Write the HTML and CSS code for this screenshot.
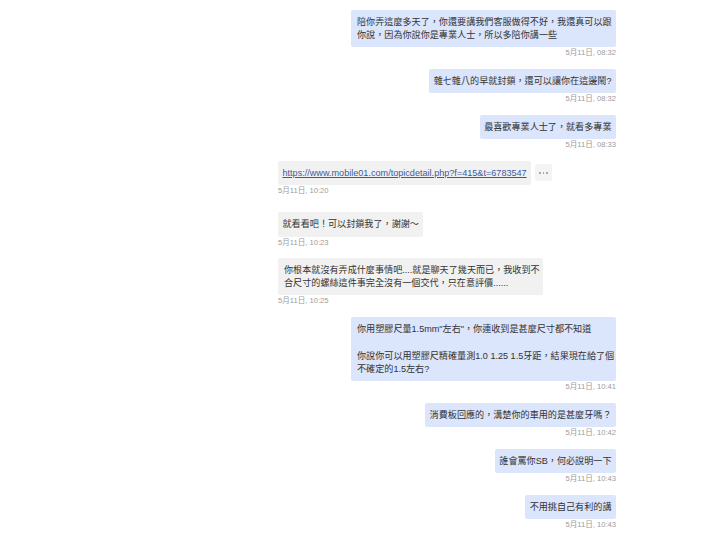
FILE: index.html
```html
<!DOCTYPE html>
<html lang="zh-Hant">
<head>
<meta charset="utf-8">
<title>Chat</title>
<link rel="stylesheet" href="styles.css">
</head>
<body>
<div class="chat">
  <div class="msg out">
    <div class="bubble full">陪你弄這麼多天了，你還要講我們客服做得不好，我還真可以跟<br>你說，因為你說你是專業人士，所以多陪你講一些</div>
    <div class="time">5月11日, 08:32</div>
  </div>
  <div class="msg out">
    <div class="bubble">雜七雜八的早就封鎖，還可以讓你在這邊鬧?</div>
    <div class="time">5月11日, 08:32</div>
  </div>
  <div class="msg out">
    <div class="bubble">最喜歡專業人士了，就看多專業</div>
    <div class="time">5月11日, 08:33</div>
  </div>
  <div class="msg in link-msg">
    <div class="row">
      <div class="bubble"><a class="link" href="#">https://www.mobile01.com/topicdetail.php?f=415&amp;t=6783547</a></div>
      <div class="more"><span></span><span></span><span></span></div>
    </div>
    <div class="time">5月11日, 10:20</div>
  </div>
  <div class="msg in">
    <div class="bubble">就看看吧！可以封鎖我了，謝謝～</div>
    <div class="time">5月11日, 10:23</div>
  </div>
  <div class="msg in">
    <div class="bubble full">你根本就沒有弄成什麼事情吧....就是聊天了幾天而已，我收到不<br>合尺寸的螺絲這件事完全沒有一個交代，只在意評價......</div>
    <div class="time">5月11日, 10:25</div>
  </div>
  <div class="msg out">
    <div class="bubble full">
      <div class="para">你用塑膠尺量1.5mm"左右"，你連收到是甚麼尺寸都不知道</div>
      <div class="para next">你說你可以用塑膠尺精確量測1.0 1.25 1.5牙距，結果現在給了個<br>不確定的1.5左右?</div>
    </div>
    <div class="time">5月11日, 10:41</div>
  </div>
  <div class="msg out">
    <div class="bubble">消費板回應的，溝楚你的車用的是甚麼牙嗎？</div>
    <div class="time">5月11日, 10:42</div>
  </div>
  <div class="msg out">
    <div class="bubble">誰會罵你SB，何必說明一下</div>
    <div class="time">5月11日, 10:43</div>
  </div>
  <div class="msg out">
    <div class="bubble">不用挑自己有利的講</div>
    <div class="time">5月11日, 10:43</div>
  </div>
</div>
</body>
</html>
```
FILE: styles.css
```css
html, body {
  margin: 0;
  padding: 0;
  background: #ffffff;
}

body {
  font-family: "Liberation Sans", "Noto Sans CJK TC", sans-serif;
  color: #333333;
}

.chat {
  width: 338px;
  margin-left: 278px;
  padding-top: 10px;
  display: flex;
  flex-direction: column;
}

.msg {
  display: flex;
  flex-direction: column;
  margin-bottom: 10.5px;
}

.msg.out {
  align-items: flex-end;
}

.msg.in {
  align-items: flex-start;
}

.link-msg {
  margin-bottom: 16px;
}

.bubble {
  box-sizing: border-box;
  padding: 6px 4.5px;
  font-size: 9.1px;
  line-height: 12.5px;
  border-radius: 2px;
  white-space: nowrap;
}

.bubble.full {
  width: 265px;
  padding-left: 6px;
}

.para.next {
  margin-top: 15px;
}

.out .bubble {
  background: #dbe5fb;
}

.in .bubble {
  background: #f1f1f1;
}

.row {
  display: flex;
  align-items: center;
  gap: 4px;
}

.link {
  color: #3b5b9e;
  text-decoration: underline;
}

.more {
  width: 17px;
  height: 17px;
  box-sizing: border-box;
  background: #f4f4f4;
  border-radius: 2px;
  display: flex;
  align-items: center;
  justify-content: center;
  gap: 2px;
}

.more span {
  width: 1.5px;
  height: 1.5px;
  border-radius: 50%;
  background: #9a9a9a;
}

.time {
  margin-top: 1px;
  font-size: 7.6px;
  line-height: 10px;
  color: #9b9b9b;
}
```
